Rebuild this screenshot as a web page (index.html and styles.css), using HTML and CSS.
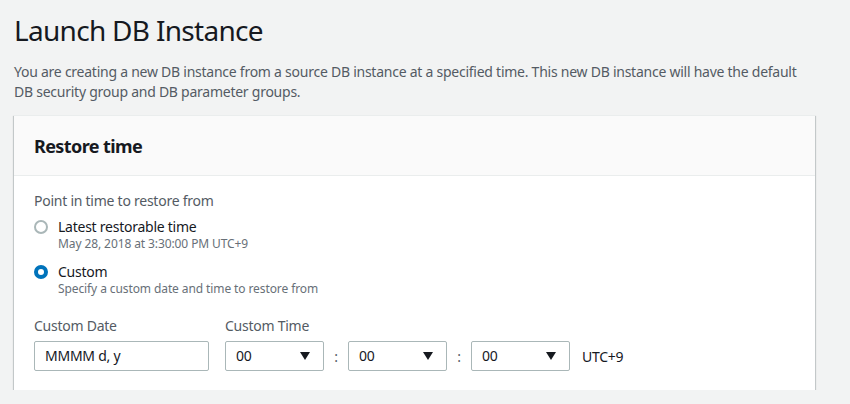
FILE: index.html
```html
<!DOCTYPE html>
<html>
<head>
<meta charset="utf-8">
<link rel="stylesheet" href="styles.css">
</head>
<body>
<div class="page">
  <h1 class="title">Launch DB Instance</h1>
  <p class="desc">You are creating a new DB instance from a source DB instance at a specified time. This new DB instance will have the default DB security group and DB parameter groups.</p>
  <div class="panel">
    <div class="panel-header"><h2>Restore time</h2></div>
    <div class="panel-body">
      <div class="field-label">Point in time to restore from</div>
      <div class="radios">
        <div class="radio-row">
          <span class="radio"></span>
          <div class="radio-text">
            <div class="radio-label">Latest restorable time</div>
            <div class="radio-desc">May 28, 2018 at 3:30:00 PM UTC+9</div>
          </div>
        </div>
        <div class="radio-row">
          <span class="radio checked"></span>
          <div class="radio-text">
            <div class="radio-label">Custom</div>
            <div class="radio-desc">Specify a custom date and time to restore from</div>
          </div>
        </div>
      </div>
      <div class="fields">
        <div class="field">
          <div class="label">Custom Date</div>
          <div class="input date">MMMM d, y</div>
        </div>
        <div class="field">
          <div class="label">Custom Time</div>
          <div class="time-row">
            <div class="input select"><span>00</span><span class="arrow"></span></div>
            <span class="colon">:</span>
            <div class="input select"><span>00</span><span class="arrow"></span></div>
            <span class="colon">:</span>
            <div class="input select"><span>00</span><span class="arrow"></span></div>
            <span class="tz">UTC+9</span>
          </div>
        </div>
      </div>
    </div>
  </div>
</div>
</body>
</html>
```
FILE: styles.css
```css
html, body {
  margin: 0;
  padding: 0;
  background: #f2f3f3;
}
body {
  font-family: "Noto Sans", "Open Sans", sans-serif;
  color: #16191f;
  letter-spacing: -0.25px;
}
.page {
  width: 801px;
  padding: 0 14px;
}
.title {
  margin: 12px 0 0;
  font-size: 28px;
  line-height: 36px;
  font-weight: 400;
  color: #16191f;
  letter-spacing: -0.7px;
}
.desc {
  margin: 14px 0 0;
  font-size: 14px;
  line-height: 20px;
  color: #545b64;
}
.panel {
  margin-top: 13px;
  background: #fff;
  box-shadow: 0 1px 1px 0 rgba(0,28,36,.3), 1px 1px 1px 0 rgba(0,28,36,.15), -1px 1px 1px 0 rgba(0,28,36,.15);
  border-top: 1px solid #eaeded;
}
.panel-header {
  height: 59px;
  background: #fafafa;
  border-bottom: 1px solid #eaeded;
  padding: 0 20px;
  display: flex;
  align-items: center;
}
.panel-header h2 {
  margin: 0;
  font-size: 18px;
  font-weight: 700;
  color: #16191f;
  letter-spacing: -0.6px;
}
.panel-body {
  padding: 15px 20px 19px;
}
.field-label, .label {
  font-size: 14px;
  line-height: 20px;
  color: #545b64;
}
.radios {
  margin-top: 6px;
  display: flex;
  flex-direction: column;
  gap: 10px;
}
.radio-row {
  display: flex;
  gap: 10px;
}
.radio {
  width: 14px;
  height: 14px;
  margin-top: 3px;
  box-sizing: border-box;
  border: 2px solid #aab7b8;
  border-radius: 50%;
  background: #fff;
  flex: none;
}
.radio.checked {
  border: 4px solid #0073bb;
}
.radio-label {
  font-size: 14px;
  line-height: 20px;
  color: #16191f;
}
.radio-desc {
  font-size: 12px;
  line-height: 16px;
  color: #687078;
  margin-top: -1px;
  letter-spacing: -0.1px;
}
.fields {
  margin-top: 19px;
  display: flex;
  gap: 16px;
}
.field .label {
  margin-bottom: 5px;
}
.input {
  box-sizing: border-box;
  height: 30px;
  border: 1px solid #aab7b8;
  border-radius: 2px;
  background: #fff;
  font-size: 14px;
  line-height: 28px;
  color: #16191f;
  padding: 0 10px;
}
.date {
  width: 175px;
}
.time-row {
  display: flex;
  align-items: center;
}
.select {
  width: 99px;
  display: flex;
  align-items: center;
  justify-content: space-between;
  padding: 0 13px 0 10px;
}
.arrow {
  width: 0;
  height: 0;
  border-left: 5px solid transparent;
  border-right: 5px solid transparent;
  border-top: 8px solid #16191f;
}
.colon {
  width: 24px;
  text-align: center;
  font-size: 14px;
  color: #545b64;
}
.tz {
  margin-left: 12px;
  font-size: 14px;
  color: #16191f;
}
```
